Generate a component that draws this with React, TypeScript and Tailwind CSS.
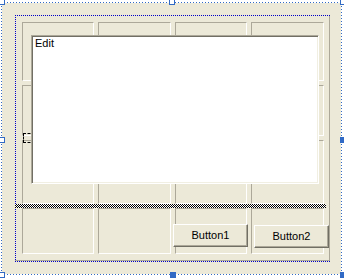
import React from 'react';

// WinForms designer surface: form frame, selected panel with a 4x4 table grid,
// a multiline edit, a splitter drag line and two buttons.

const COL = ['col-start-1', 'col-start-2', 'col-start-3', 'col-start-4'];
const ROW = ['row-start-1', 'row-start-2', 'row-start-3', 'row-start-4'];

const Handle: React.FC<{ filled?: boolean; className: string }> = ({ filled, className }) => (
  <div
    className={
      'absolute w-[6px] h-[6px] border border-[#316ac5] ' +
      (filled ? 'bg-[#316ac5] ' : 'bg-white ') +
      className
    }
  />
);

const XpButton: React.FC<{ label: string; className: string }> = ({ label, className }) => (
  <button
    className={
      'self-start justify-self-start w-[75px] h-[23px] flex items-center justify-center bg-[#ece9d8] text-[11px] leading-[13px] text-black border border-t-white border-l-white border-b-[#716f64] border-r-[#716f64] shadow-[inset_-1px_-1px_0_#aca899] ' +
      className
    }
  >
    {label}
  </button>
);

const dotsH = 'repeating-linear-gradient(90deg,#316ac5_0_1px,#fff_1px_3px)';

export default function App() {
  return (
    <div className="relative w-[344px] h-[278px] overflow-hidden bg-white pl-[1px] pt-[2px] font-['Liberation_Sans',Arial,sans-serif]">
      {/* form frame */}
      <div className="flex flex-col w-[341px] h-[273px]">
        <div className="h-px w-full bg-[repeating-linear-gradient(90deg,#316ac5_0_1px,#fff_1px_3px)]" />
        <div className="flex flex-1">
          <div className="w-px bg-[repeating-linear-gradient(180deg,#316ac5_0_1px,#fff_1px_3px)]" />
          <div className="flex-1 bg-[#ece9d8] pl-[13px] pt-[12px]">
            {/* selected panel */}
            <div className="w-[315px] h-[247px] pl-[7px] pt-[7px] [background:repeating-linear-gradient(90deg,#0000c8_0_1px,transparent_1px_2px)_0_0/100%_1px_no-repeat,repeating-linear-gradient(90deg,#0000c8_0_1px,transparent_1px_2px)_0_100%/100%_1px_no-repeat,repeating-linear-gradient(180deg,#0000c8_0_1px,transparent_1px_2px)_0_0/1px_100%_no-repeat,linear-gradient(#aca899,#aca899)_0_calc(100%_-_1px)/100%_1px_no-repeat,linear-gradient(#aca899,#aca899)_100%_0/1px_calc(100%_-_1px)_no-repeat]">
              <div className="grid grid-cols-[72px_73px_72px_73px] grid-rows-[59px_51px_64px_46px] gap-[4px]">
                {ROW.map((r) =>
                  COL.map((c) => (
                    <div
                      key={r + c}
                      className={`${r} ${c} border border-t-[#aca899] border-l-[#aca899] border-b-white border-r-white`}
                    />
                  ))
                )}

                {/* clipped label behind the edit */}
                <div className="row-start-2 col-start-1 self-start justify-self-start ml-px mt-[48px] w-[12px] h-[10px] border border-dashed border-black" />

                {/* edit */}
                <div className="row-start-1 col-start-1 row-span-3 col-span-4 self-start justify-self-start ml-[9px] mt-[13px] w-[288px] h-[149px] bg-white border border-t-[#aca899] border-l-[#aca899] border-b-white border-r-white shadow-[inset_1px_1px_0_#716f64,inset_-1px_-1px_0_#f1efe2] pl-[3px] pt-px text-[11px] leading-[13px] text-black">
                  Edit
                </div>

                {/* splitter drag line */}
                <div className="row-start-4 col-start-1 col-span-4 self-start justify-self-start -ml-[7px] -mt-[4px] w-[311px] h-[4px] bg-[repeating-conic-gradient(#000_0_25%,#fff_0_50%)] bg-[length:2px_2px]" />

                <XpButton label="Button1" className="row-start-4 col-start-3 -ml-[2px] mt-[16px]" />
                <XpButton label="Button2" className="row-start-4 col-start-4 ml-[3px] mt-[17px]" />
              </div>
            </div>
          </div>
          <div className="w-px bg-[repeating-linear-gradient(180deg,#316ac5_0_1px,#fff_1px_3px)]" />
        </div>
        <div className="h-px w-full bg-[repeating-linear-gradient(90deg,#316ac5_0_1px,#fff_1px_3px)]" />
      </div>

      {/* grab handles */}
      <Handle className="left-[-1px] top-[-1px]" />
      <Handle className="left-[169px] top-[-1px]" />
      <Handle className="left-[340px] top-[-1px]" />
      <Handle className="left-[-1px] top-[137px]" />
      <Handle filled className="left-[340px] top-[137px]" />
      <Handle className="left-[-1px] top-[272px]" />
      <Handle filled className="left-[170px] top-[272px]" />
      <Handle filled className="left-[340px] top-[272px]" />
    </div>
  );
}
